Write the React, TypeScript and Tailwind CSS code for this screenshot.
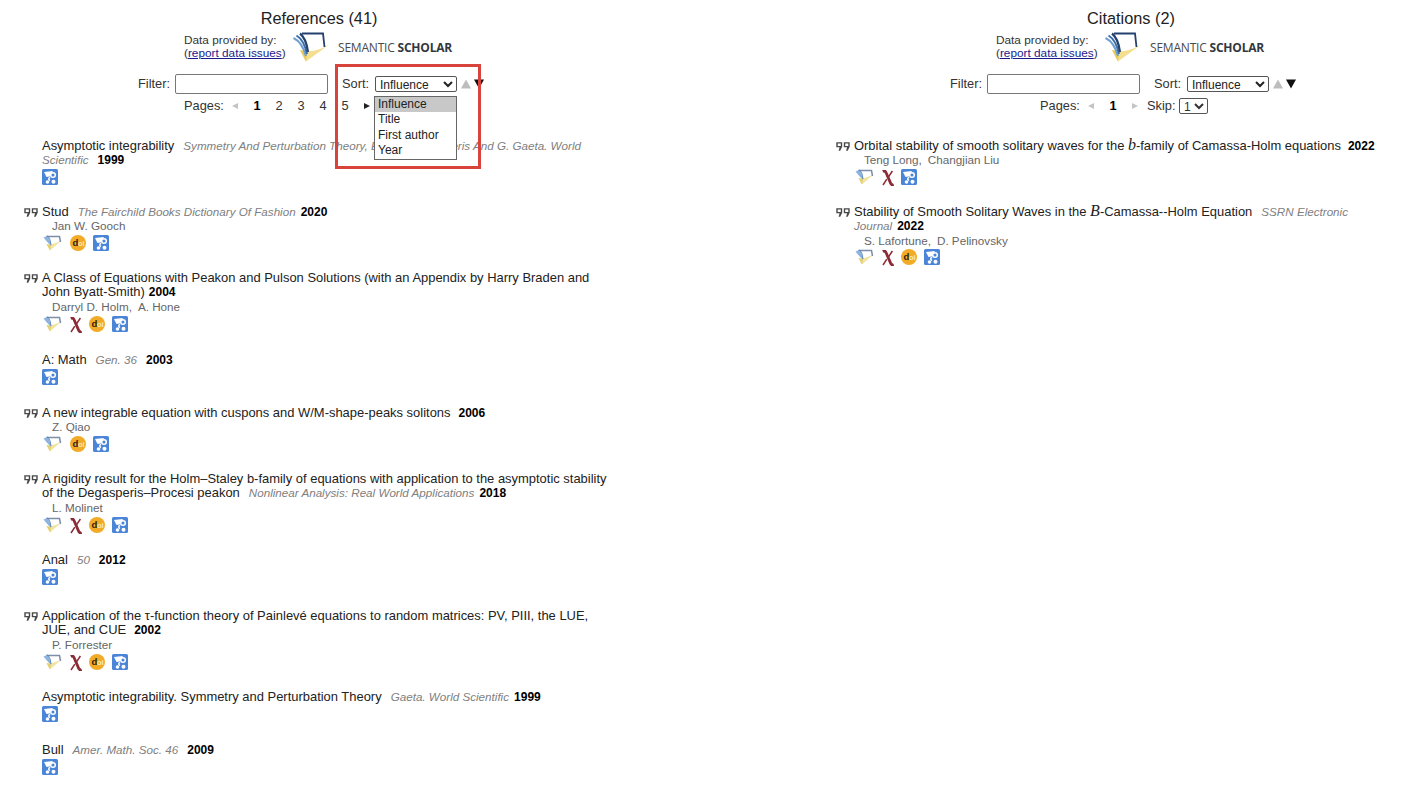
import React from "react";

function Logo({ w, h }: { w: number; h: number }) {
  return (
    <svg width={w} height={h} viewBox="0 0 38 30">
      <path d="M37 12 L13 29.5 L7 18 Q22 22 37 12 Z" fill="#f3df8f" />
      <path d="M13 29.5 L7 18 L14 20 Z" fill="#e8c95a" />
      <path d="M9 1.5 H30 L31.5 15" fill="none" stroke="#24406e" strokeWidth="1.8" />
      <path d="M0.5 6 Q9 10 13 24" fill="none" stroke="#6f9fd0" strokeWidth="2" />
      <path d="M3.5 3.5 Q11 8 14 22" fill="none" stroke="#3a6ea8" strokeWidth="2" />
      <path d="M7 1.5 Q13 6 15 20" fill="none" stroke="#24406e" strokeWidth="2.2" />
    </svg>
  );
}

function SmallLogo() {
  return (
    <svg width="20" height="16" viewBox="0 0 20 16">
      <path d="M19 5 L7 15.5 L3.5 9 Q11 10 19 5 Z" fill="#f1e3a0" />
      <path d="M7 15.5 L3.5 9 L8 10.5 Z" fill="#e6cf6e" />
      <path d="M4 1.5 H16.5 L17.5 7" fill="none" stroke="#7d8ea9" strokeWidth="1.5" />
      <path d="M0.5 2.5 L4 1 Q7 4 8 11 Q4 7 0.5 2.5 Z" fill="#8db3de" />
      <path d="M3.5 1.2 L5 1.2 Q7.5 4 8 10" fill="none" stroke="#5b86b8" strokeWidth="1" />
    </svg>
  );
}

function Quote() {
  return (
    <svg width="14" height="9" viewBox="0 0 14 9" className="mt-[3px]">
      <path
        fillRule="evenodd"
        d="M0.3 0.3 H6.2 V4.8 L4.2 8.7 H2.6 L3.6 5.2 H0.3 Z M1.7 1.6 V3.9 H4.8 V1.6 Z M7.8 0.3 H13.7 V4.8 L11.7 8.7 H10.1 L11.1 5.2 H7.8 Z M9.2 1.6 V3.9 H12.3 V1.6 Z"
        fill="#484848"
      />
    </svg>
  );
}

function Arxiv() {
  return (
    <svg width="12" height="16" viewBox="0 0 12 16" className="mt-[1px]">
      <path d="M0.8 1.4 Q3 0.4 4 2.5 L8.8 13.6 Q9.8 15.4 11.6 14.4" fill="none" stroke="#8c2a36" strokeWidth="2.8" />
      <path d="M10.4 1 L6 7.6 M4.8 9.2 L1 15" fill="none" stroke="#8c2a36" strokeWidth="1.5" />
    </svg>
  );
}

function Doi() {
  return (
    <svg width="16" height="16" viewBox="0 0 16 16">
      <circle cx="8" cy="8" r="8" fill="#f2ab27" />
      <text x="2.6" y="11" fontSize="9.5" fontWeight="700" fill="#2b2110" fontFamily="Liberation Sans, sans-serif">d</text>
      <text x="8" y="11" fontSize="7.5" fontWeight="700" fill="#fde9b8" fontFamily="Liberation Sans, sans-serif">oi</text>
    </svg>
  );
}

function Gs() {
  return (
    <svg width="16" height="16" viewBox="0 0 16 16">
      <rect width="16" height="16" rx="1.5" fill="#4a85d8" />
      <path d="M2 3 L11 2 L7.5 7.5 L4.5 8 Z" fill="#fff" />
      <circle cx="11" cy="6" r="2.3" fill="none" stroke="#fff" strokeWidth="1.5" />
      <path d="M8 8 Q5.5 10 8 11.5" fill="none" stroke="#fff" strokeWidth="1.5" />
      <circle cx="5.5" cy="13" r="1.8" fill="#fff" />
      <circle cx="11.5" cy="12.8" r="2" fill="#fff" />
    </svg>
  );
}

type Icon = "s" | "x" | "d" | "g";

type Item = {
  quote?: boolean;
  tight?: boolean;
  title: React.ReactNode;
  journal?: string;
  year: string;
  yearGap: string;
  authors?: string[];
  icons: Icon[];
  mb: string;
};

function IconRow({ icons, tight }: { icons: Icon[]; tight?: boolean }) {
  return (
    <div className={`flex items-start gap-[7px] h-[16px] ${tight ? "mt-[1px]" : "mt-[2px]"}`}>
      {icons.map((i, n) =>
        i === "s" ? (
          <span key={n} className="w-[21px] pl-[1px] block">
            <SmallLogo />
          </span>
        ) : i === "x" ? (
          <Arxiv key={n} />
        ) : i === "d" ? (
          <Doi key={n} />
        ) : (
          <Gs key={n} />
        )
      )}
    </div>
  );
}

function Entry({ item, width }: { item: Item; width: string }) {
  return (
    <div className={`flex ${item.mb}`}>
      <div className="w-[18px] shrink-0">{item.quote ? <Quote /> : null}</div>
      <div className={width}>
        <div className="leading-[14.5px] text-[#222] text-[12.95px]">
          <span>{item.title}</span>
          {item.journal ? <span className="ml-[9px] italic text-[#808080] text-[11.65px]">{item.journal}</span> : null}
          <span className={`${item.yearGap} font-bold text-black text-[12px]`}>{item.year}</span>
        </div>
        {item.authors ? (
          <div className="leading-[14.5px] pl-[10px] text-[#666] text-[11.7px]">
            {item.authors.map((a, i) => (
              <span key={a} className={i ? "ml-[6px]" : ""}>
                {a}
                {i < item.authors!.length - 1 ? "," : ""}
              </span>
            ))}
          </div>
        ) : null}
        <IconRow icons={item.icons} tight={item.tight} />
      </div>
    </div>
  );
}

const Triangle = ({ up, color }: { up?: boolean; color: string }) => (
  <svg width="10" height="10" viewBox="0 0 10 10">
    <path d={up ? "M5 0.5 L10 9.5 H0 Z" : "M0 0.5 H10 L5 9.5 Z"} fill={color} />
  </svg>
);

const Cell = ({ children, bold }: { children: React.ReactNode; bold?: boolean }) => (
  <span className={`w-[22px] text-center ${bold ? "font-bold text-black" : ""}`}>{children}</span>
);

function Arrow({ right, color }: { right?: boolean; color: string }) {
  return (
    <span className="w-[22px] flex justify-center">
      <svg width="6" height="6" viewBox="0 0 6 6">
        <path d={right ? "M0 0 L6 3 L0 6 Z" : "M6 0 L0 3 L6 6 Z"} fill={color} />
      </svg>
    </span>
  );
}

function Header({ title, children }: { title: string; children: React.ReactNode }) {
  return (
    <>
      <div className="w-[638px] h-[36px] leading-[36px] text-center text-[16.3px] text-[#222]">{title}</div>
      <div className="flex h-[32px] pl-[184px] items-start">
        <div className="w-[109px] text-[11.8px] leading-[13px] pt-[1px] text-[#333] mt-[-3px]">
          <div>Data provided by:</div>
          <div>
            (<span className="underline text-[#1a1a8c]">report data issues</span>)
          </div>
        </div>
        <div className="mt-[-4px]">
          <Logo w={38} h={30} />
        </div>
        <div className="ml-[7px] mt-[5px] text-[12px] leading-[14px] text-[#4a4a4a] font-['Open_Sans',sans-serif] tracking-[-0.2px] whitespace-nowrap">
          SEMANTIC <b className="text-[#33383f]">SCHOLAR</b>
        </div>
      </div>
      <div className="flex items-center h-[20px] mt-[6px] pl-[138px] text-[#333] text-[12.8px]">
        <span className="w-[37px]">Filter:</span>
        <input className="w-[153px] h-[20px] border border-[#777] rounded-[2px] bg-white" />
        <span className="ml-[14px] w-[33px]">Sort:</span>
        <select
          defaultValue="Influence"
          className="w-[82px] h-[16px] border border-[#555] rounded-[2px] bg-white text-[12px] text-[#222]"
        >
          <option>Influence</option>
          <option>Title</option>
          <option>First author</option>
          <option>Year</option>
        </select>
        <span className="ml-[4px] mr-[3px] flex">
          <Triangle up color="#bdbdbd" />
        </span>
        <Triangle color="#111" />
      </div>
      {children}
    </>
  );
}

const left: Item[] = [
  {
    tight: true,
    title: "Asymptotic integrability",
    journal: "Symmetry And Perturbation Theory, Eds. A. Degasperis And G. Gaeta. World Scientific",
    year: "1999",
    yearGap: "ml-[9px]",
    icons: ["g"],
    mb: "mb-[20px]",
  },
  { quote: true, tight: true, title: "Stud", journal: "The Fairchild Books Dictionary Of Fashion", year: "2020", yearGap: "ml-[5px]", authors: ["Jan W. Gooch"], icons: ["s", "d", "g"], mb: "mb-[20px]" },
  {
    quote: true,
    title: "A Class of Equations with Peakon and Pulson Solutions (with an Appendix by Harry Braden and John Byatt-Smith)",
    year: "2004",
    yearGap: "ml-[4px]",
    authors: ["Darryl D. Holm", "A. Hone"],
    icons: ["s", "x", "d", "g"],
    mb: "mb-[20.5px]",
  },
  { title: "A: Math", journal: "Gen. 36", year: "2003", yearGap: "ml-[9px]", icons: ["g"], mb: "mb-[20.5px]" },
  { quote: true, tight: true, title: "A new integrable equation with cuspons and W/M-shape-peaks solitons", year: "2006", yearGap: "ml-[8px]", authors: ["Z. Qiao"], icons: ["s", "d", "g"], mb: "mb-[20px]" },
  {
    quote: true,
    title: "A rigidity result for the Holm–Staley b-family of equations with application to the asymptotic stability of the Degasperis–Procesi peakon",
    journal: "Nonlinear Analysis: Real World Applications",
    year: "2018",
    yearGap: "ml-[5px]",
    authors: ["L. Molinet"],
    icons: ["s", "x", "d", "g"],
    mb: "mb-[19.5px]",
  },
  { title: "Anal", journal: "50", year: "2012", yearGap: "ml-[9px]", icons: ["g"], mb: "mb-[23.5px]" },
  {
    quote: true,
    title: "Application of the τ-function theory of Painlevé equations to random matrices: PV, PIII, the LUE, JUE, and CUE",
    year: "2002",
    yearGap: "ml-[8px]",
    authors: ["P. Forrester"],
    icons: ["s", "x", "d", "g"],
    mb: "mb-[19.5px]",
  },
  { title: "Asymptotic integrability. Symmetry and Perturbation Theory", journal: "Gaeta. World Scientific", year: "1999", yearGap: "ml-[5px]", icons: ["g"], mb: "mb-[20.5px]" },
  { title: "Bull", journal: "Amer. Math. Soc. 46", year: "2009", yearGap: "ml-[9px]", icons: ["g"], mb: "mb-[20px]" },
];

const Math1 = ({ c }: { c: string }) => <i className="font-['Liberation_Serif',serif] text-[16px] leading-[0]">{c}</i>;

const right: Item[] = [
  {
    quote: true,
    tight: true,
    title: (
      <>
        Orbital stability of smooth solitary waves for the <Math1 c="b" />-family of Camassa-Holm equations
      </>
    ),
    year: "2022",
    yearGap: "ml-[7px]",
    authors: ["Teng Long", "Changjian Liu"],
    icons: ["s", "x", "g"],
    mb: "mb-[20px]",
  },
  {
    quote: true,
    tight: true,
    title: (
      <>
        Stability of Smooth Solitary Waves in the <Math1 c="B" />-Camassa--Holm Equation
      </>
    ),
    journal: "SSRN Electronic Journal",
    year: "2022",
    yearGap: "ml-[5px]",
    authors: ["S. Lafortune", "D. Pelinovsky"],
    icons: ["s", "x", "d", "g"],
    mb: "mb-[19px]",
  },
];

export default function App() {
  return (
    <div className="w-[1414px] h-[798px] overflow-hidden bg-white text-[12.5px] font-['Liberation_Sans',Arial,sans-serif] grid grid-cols-[812px_602px]">
      <div className="relative">
        <Header title="References (41)">
          <div className="flex items-center h-[16px] mt-[4px] pl-[184px] text-[#333] text-[12.8px]">
            <span className="w-[40px]">Pages:</span>
            <Arrow color="#c4c4c4" />
            <Cell bold>1</Cell>
            <Cell>2</Cell>
            <Cell>3</Cell>
            <Cell>4</Cell>
            <Cell>5</Cell>
            <Arrow right color="#222" />
          </div>
        </Header>
        <div className="pl-[24px] pt-[24.5px]">
          {left.map((it, i) => (
            <Entry key={i} item={it} width="w-[573px]" />
          ))}
        </div>
        <div className="absolute left-[374px] top-[96px] w-[83px] h-[64px] bg-white border border-[#666] text-[12px] leading-[15.3px] text-[#222] z-10">
          <div className="bg-[#c8c8c8] pl-[3px]">Influence</div>
          <div className="pl-[3px]">Title</div>
          <div className="pl-[3px]">First author</div>
          <div className="pl-[3px]">Year</div>
        </div>
        <div className="absolute left-[335px] top-[64px] w-[146px] h-[105px] border-[3px] border-[#d8433c] z-20" />
      </div>
      <div>
        <Header title="Citations (2)">
          <div className="flex items-center h-[16px] mt-[4px] pl-[228px] text-[#333] text-[12.8px]">
            <span className="w-[40px]">Pages:</span>
            <Arrow color="#c4c4c4" />
            <Cell bold>1</Cell>
            <Arrow right color="#c4c4c4" />
            <span className="ml-[1px] w-[32px]">Skip:</span>
            <select defaultValue="1" className="w-[29px] h-[16px] border border-[#555] rounded-[2px] bg-white text-[12px]">
              <option>1</option>
            </select>
          </div>
        </Header>
        <div className="pl-[24px] pt-[24.5px]">
          {right.map((it, i) => (
            <Entry key={i} item={it} width="w-[532px]" />
          ))}
        </div>
      </div>
    </div>
  );
}
